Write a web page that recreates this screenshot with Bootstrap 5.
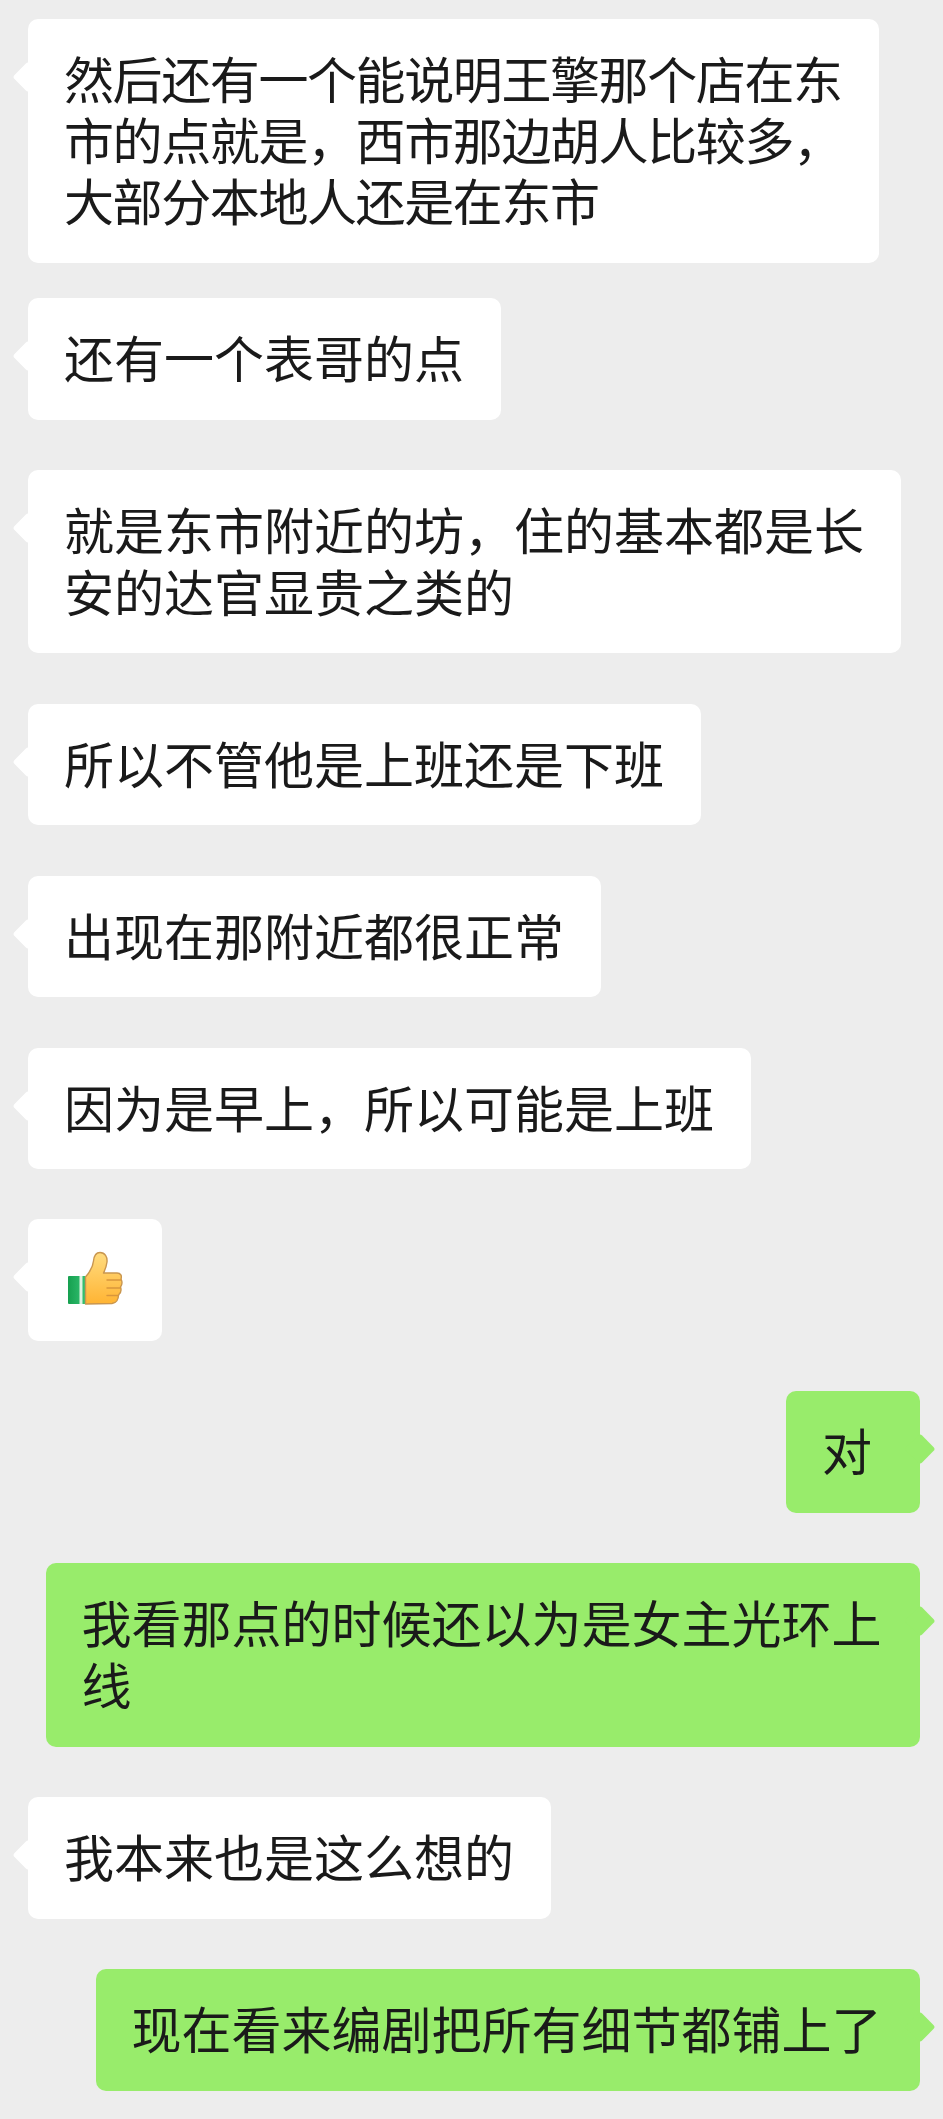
<!DOCTYPE html>
<html lang="zh-CN">
<head>
    <meta charset="UTF-8">
    <meta name="viewport" content="width=device-width, initial-scale=1.0">
    <title>聊天记录</title>
    <link rel="stylesheet" href="https://cdn.jsdelivr.net/npm/bootstrap@5.3.0/dist/css/bootstrap.min.css">
    <style>
        body {
            background-color: #ededed;
        }
        .chat-list {
            padding: 19px 23px 30px 28px;
        }
        .bubble {
            position: relative;
            min-width: 134px;
            margin-bottom: 50.3px;
            padding: 27px 37px 32.6px 36px;
            border-radius: 10px;
            font-family: "Noto Sans CJK SC", "Liberation Sans", sans-serif;
            font-size: 50px;
            line-height: 62px;
            color: #1a1a1a;
            white-space: nowrap;
        }
        .bubble::before {
            content: "";
            position: absolute;
            top: 47px;
            width: 22px;
            height: 22px;
            border-radius: 3px;
            background: inherit;
            transform: rotate(45deg);
        }
        .bubble-in {
            background-color: #fff;
        }
        .bubble-in::before {
            left: -11px;
        }
        .bubble-out {
            padding-right: 38.5px;
            background-color: #98ec6b;
        }
        .bubble-out::before {
            right: -11px;
        }
        .bubble-first {
            margin-bottom: 35px;
            padding-top: 27.5px;
            padding-bottom: 33.5px;
            line-height: 61px;
            letter-spacing: -1.4px;
        }
        .thumb-box {
            height: 60px;
            margin-top: 2px;
        }
    </style>
</head>
<body>
    <div class="chat-list d-flex flex-column">
        <div class="bubble bubble-in bubble-first align-self-start">然后还有一个能说明王擎那个店在东<br>市的点就是，西市那边胡人比较多，<br>大部分本地人还是在东市</div>
        <div class="bubble bubble-in align-self-start">还有一个表哥的点</div>
        <div class="bubble bubble-in align-self-start">就是东市附近的坊，住的基本都是长<br>安的达官显贵之类的</div>
        <div class="bubble bubble-in align-self-start">所以不管他是上班还是下班</div>
        <div class="bubble bubble-in align-self-start">出现在那附近都很正常</div>
        <div class="bubble bubble-in align-self-start">因为是早上，所以可能是上班</div>
        <div class="bubble bubble-in align-self-start">
            <div class="thumb-box d-flex align-items-center justify-content-center">
                <svg width="56" height="54" viewBox="0 0 56 54" role="img" aria-label="赞">
                    <defs>
                        <linearGradient id="handFill" x1="0" y1="0" x2="0" y2="1">
                            <stop offset="0" stop-color="#ffdc80"/>
                            <stop offset="1" stop-color="#ffb433"/>
                        </linearGradient>
                        <linearGradient id="cuffFill" x1="0" y1="0" x2="1" y2="0">
                            <stop offset="0" stop-color="#16a04f"/>
                            <stop offset="1" stop-color="#35c274"/>
                        </linearGradient>
                    </defs>
                    <rect x="1" y="25" width="18" height="28" rx="1" fill="url(#cuffFill)"/>
                    <rect x="12.5" y="25" width="3" height="28" fill="#dff3e2"/>
                    <path d="M18.5 26 C22 22 26 16 26.5 10 C27 5 29 1.5 33 1.5 C38 1.5 40.5 6 40 11 C39.5 15 38 19 36.5 22 L50 22 C54 22 55 25 54 28 C55.5 31 55 34 53.5 36 C54.5 39 54 42 51.5 44 C51.5 48 49.5 52 45 52.5 L18.5 53 Z" fill="url(#handFill)" stroke="#c9964f" stroke-width="1.4" stroke-linejoin="round"/>
                    <path d="M40 29 H54 M40 37 H53.5 M40 44.5 H51.5" fill="none" stroke="#d9963c" stroke-width="1.4" stroke-linecap="round"/>
                </svg>
            </div>
        </div>
        <div class="bubble bubble-out align-self-end">对</div>
        <div class="bubble bubble-out align-self-end">我看那点的时候还以为是女主光环上<br>线</div>
        <div class="bubble bubble-in align-self-start">我本来也是这么想的</div>
        <div class="bubble bubble-out align-self-end">现在看来编剧把所有细节都铺上了</div>
    </div>
    <script src="https://cdn.jsdelivr.net/npm/bootstrap@5.3.0/dist/js/bootstrap.bundle.min.js"></script>
</body>
</html>
